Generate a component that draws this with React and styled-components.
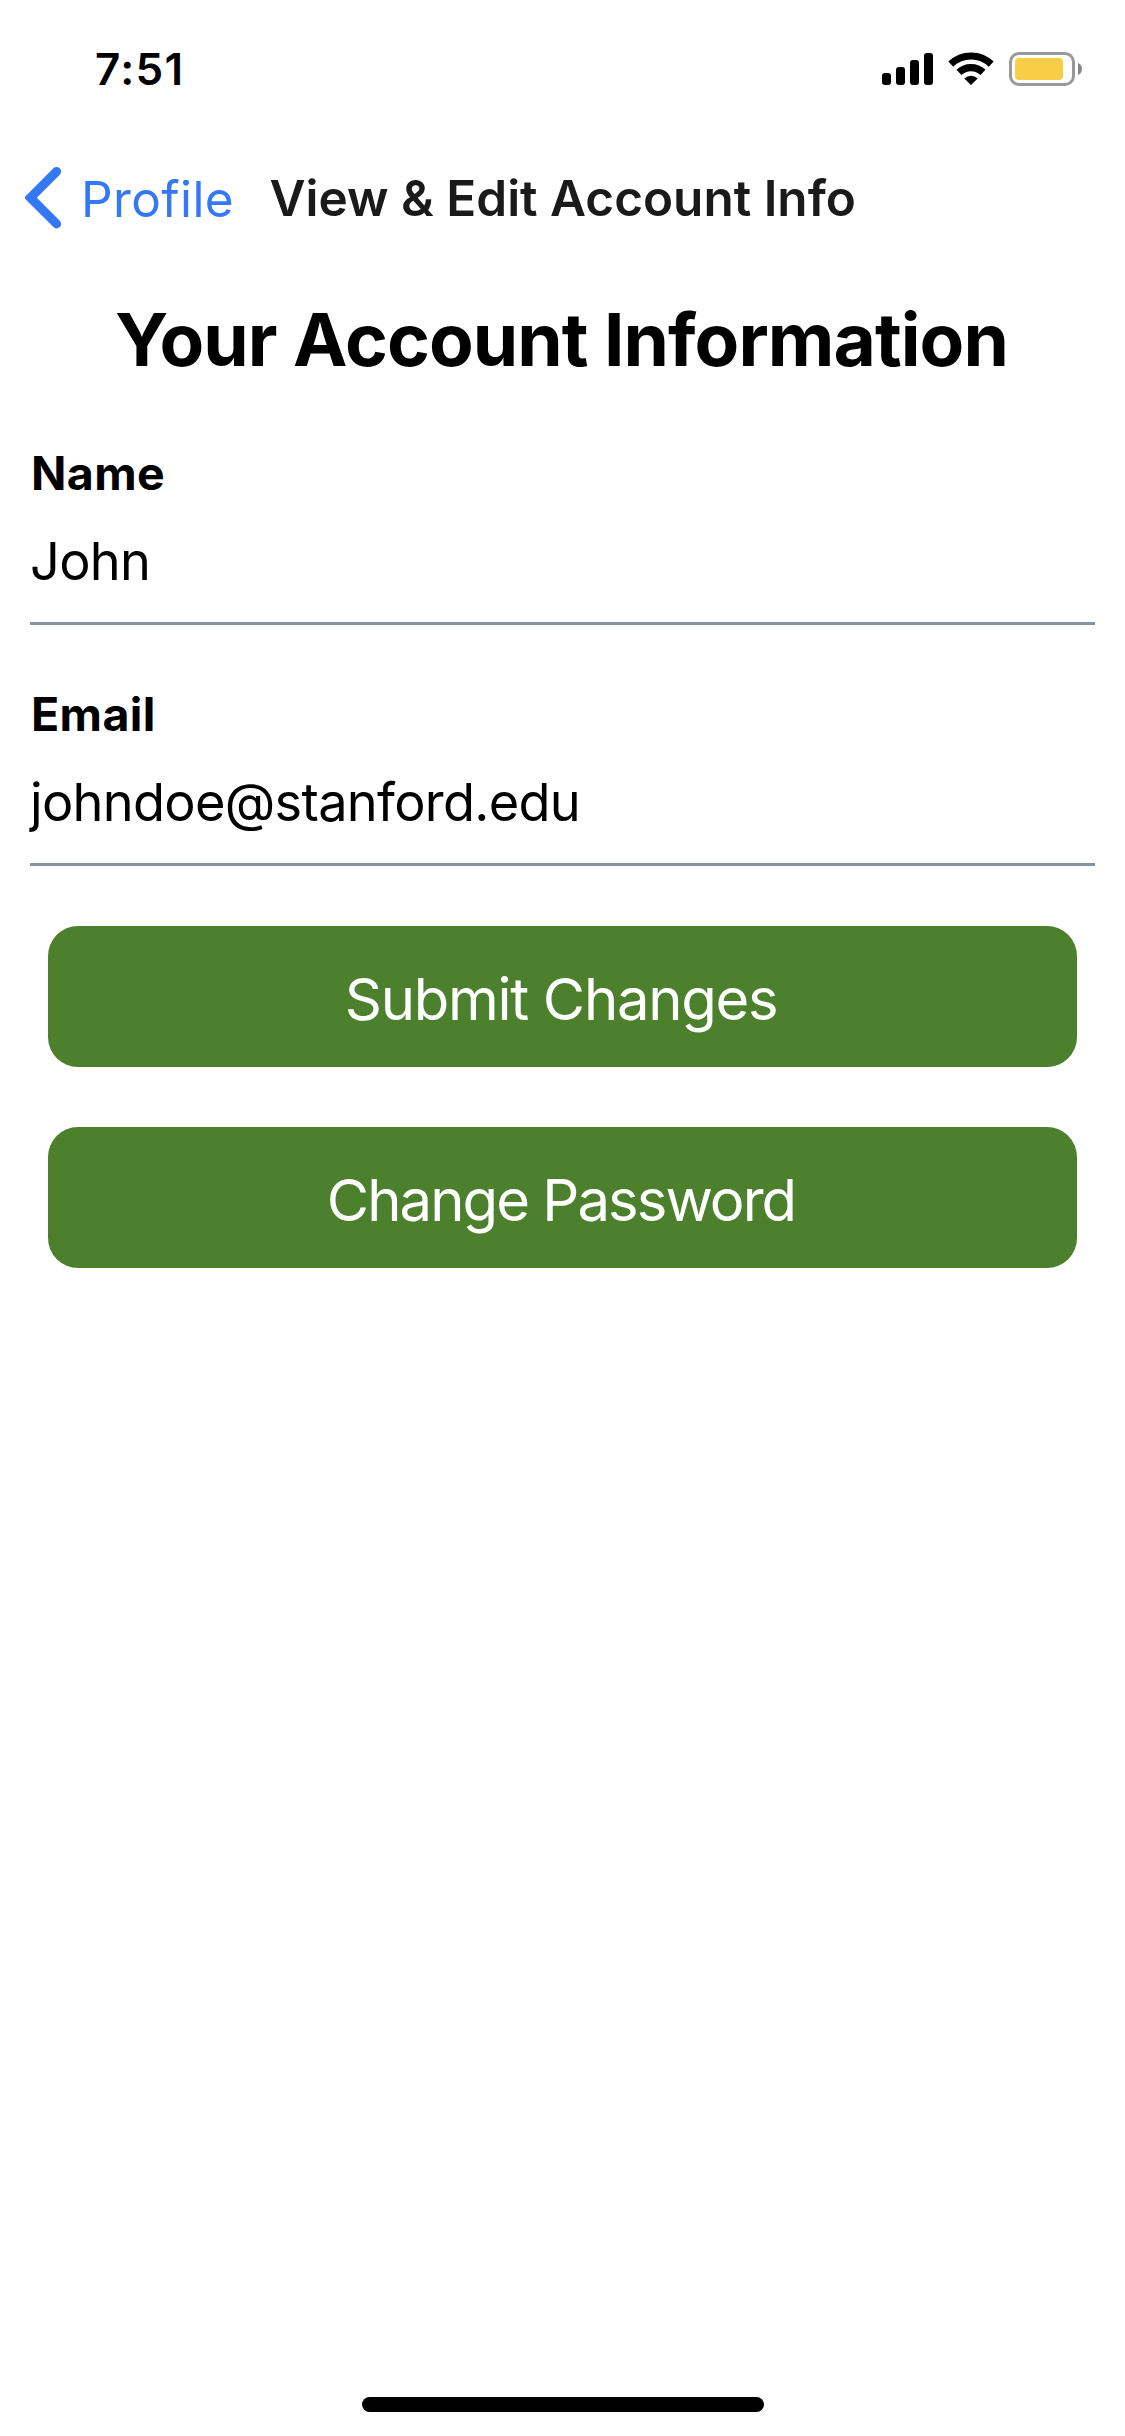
import React from "react";
import styled, { createGlobalStyle } from "styled-components";

const GlobalStyle = createGlobalStyle`
  * { box-sizing: border-box; }
  body { margin: 0; background: #fff; }
`;

const Screen = styled.div`
  display: flex;
  flex-direction: column;
  width: 1125px;
  height: 2436px;
  background: #fff;
  color: #000;
  font-family: Inter, "Liberation Sans", sans-serif;
  overflow: hidden;
`;

const StatusBar = styled.div`
  display: flex;
  justify-content: space-between;
  align-items: flex-start;
  height: 132px;
  padding: 43px 43px 0 95px;
`;

const Time = styled.span`
  font-size: 44px;
  line-height: 52px;
  font-weight: 600;
  letter-spacing: 1.3px;
`;

const StatusIcons = styled.svg`
  display: block;
  width: 200px;
  height: 34px;
  margin-top: 9px;
`;

const NavBar = styled.header`
  display: flex;
  align-items: center;
  height: 133px;
  padding: 0 0 1px 25px;
`;

const BackButton = styled.button`
  display: flex;
  align-items: center;
  gap: 19px;
  width: 244.5px;
  padding: 0;
  border: 0;
  background: none;
  color: #3478f6;
  font: inherit;
  font-size: 49.5px;
  line-height: 60px;
  letter-spacing: 0.4px;
  white-space: nowrap;
`;

const BackLabel = styled.span`
  padding-top: 2px;
`;

const Chevron = styled.svg`
  flex: none;
  width: 37px;
  height: 62px;
`;

const NavTitle = styled.div`
  padding-bottom: 1px;
  font-size: 49.5px;
  line-height: 60px;
  font-weight: 600;
  color: #1a1a1a;
  letter-spacing: 0;
  white-space: nowrap;
`;

const Main = styled.main`
  display: flex;
  flex-direction: column;
  flex: 1;
  padding: 31px 30px 0;
`;

const Heading = styled.h1`
  margin: 0 0 61px;
  padding-right: 2px;
  font-size: 73px;
  line-height: 88px;
  font-weight: 700;
  text-align: center;
  letter-spacing: -0.93px;
  white-space: nowrap;
`;

const Form = styled.div`
  display: flex;
  flex-direction: column;
  gap: 61px;
`;

const Field = styled.label`
  display: flex;
  flex-direction: column;
`;

const Label = styled.span`
  padding-left: 1px;
  font-size: 46.5px;
  line-height: 56px;
  font-weight: 700;
  letter-spacing: 0.35px;
`;

const Value = styled.span`
  height: 124px;
  border-bottom: 3px solid #86939e;
  font-size: 52.3px;
  line-height: 121px;
  letter-spacing: -0.7px;
`;

const Actions = styled.div`
  display: flex;
  flex-direction: column;
  gap: 60px;
  padding: 60px 18px 0;
`;

const ActionButton = styled.button`
  height: 141px;
  padding: 5px 3px 0 0;
  border: 0;
  border-radius: 30px;
  background: #4c802c;
  color: #fff;
  font: inherit;
  font-size: 58px;
  line-height: 72px;
  letter-spacing: ${(p) => p.$tracking}px;
`;

const HomeIndicator = styled.div`
  align-self: center;
  width: 402px;
  height: 15px;
  margin: 0 0 24px 1px;
  border-radius: 8px;
  background: #000;
`;

const fields = [
  { label: "Name", value: "John" },
  { label: "Email", value: "johndoe@stanford.edu" },
];

const actions = [
  { text: "Submit Changes", tracking: -1.3 },
  { text: "Change Password", tracking: -1.95 },
];

function StatusGlyphs() {
  return (
    <StatusIcons viewBox="882 52 200 34" aria-hidden="true">
      <rect x="882" y="73" width="9" height="12" rx="3" />
      <rect x="896" y="67" width="9" height="18" rx="3" />
      <rect x="910" y="60" width="9" height="25" rx="3" />
      <rect x="924" y="53" width="9" height="32" rx="3" />
      <g fill="none" stroke="#000" strokeWidth="7.2">
        <path d="M950.8 64.2A29 29 0 0 1 991.2 64.2" />
        <path d="M959 72.4A17.3 17.3 0 0 1 983 72.4" />
      </g>
      <path d="M971 85L964.3 78.4A9.5 9.5 0 0 1 977.7 78.4Z" />
      <rect x="1010.5" y="53.5" width="63" height="31" rx="8.5" fill="none" stroke="#999" strokeWidth="3" />
      <rect x="1015" y="58" width="48" height="22" rx="4" fill="#f7ce46" />
      <path d="M1078 63C1083.2 64.5 1083.2 73.5 1078 75Z" fill="#858585" />
    </StatusIcons>
  );
}

export default function App() {
  return (
    <Screen>
      <GlobalStyle />
      <StatusBar>
        <Time>7:51</Time>
        <StatusGlyphs />
      </StatusBar>
      <NavBar>
        <BackButton type="button">
          <Chevron viewBox="25 167 37 62" aria-hidden="true">
            <path
              d="M56.6 171.5L30.4 197.7L56.6 223.9"
              fill="none"
              stroke="#3478f6"
              strokeWidth="9"
              strokeLinecap="round"
            />
          </Chevron>
          <BackLabel>Profile</BackLabel>
        </BackButton>
        <NavTitle>View &amp; Edit Account Info</NavTitle>
      </NavBar>
      <Main>
        <Heading>Your Account Information</Heading>
        <Form>
          {fields.map((f) => (
            <Field key={f.label}>
              <Label>{f.label}</Label>
              <Value>{f.value}</Value>
            </Field>
          ))}
        </Form>
        <Actions>
          {actions.map((a) => (
            <ActionButton key={a.text} type="button" $tracking={a.tracking}>
              {a.text}
            </ActionButton>
          ))}
        </Actions>
      </Main>
      <HomeIndicator />
    </Screen>
  );
}
